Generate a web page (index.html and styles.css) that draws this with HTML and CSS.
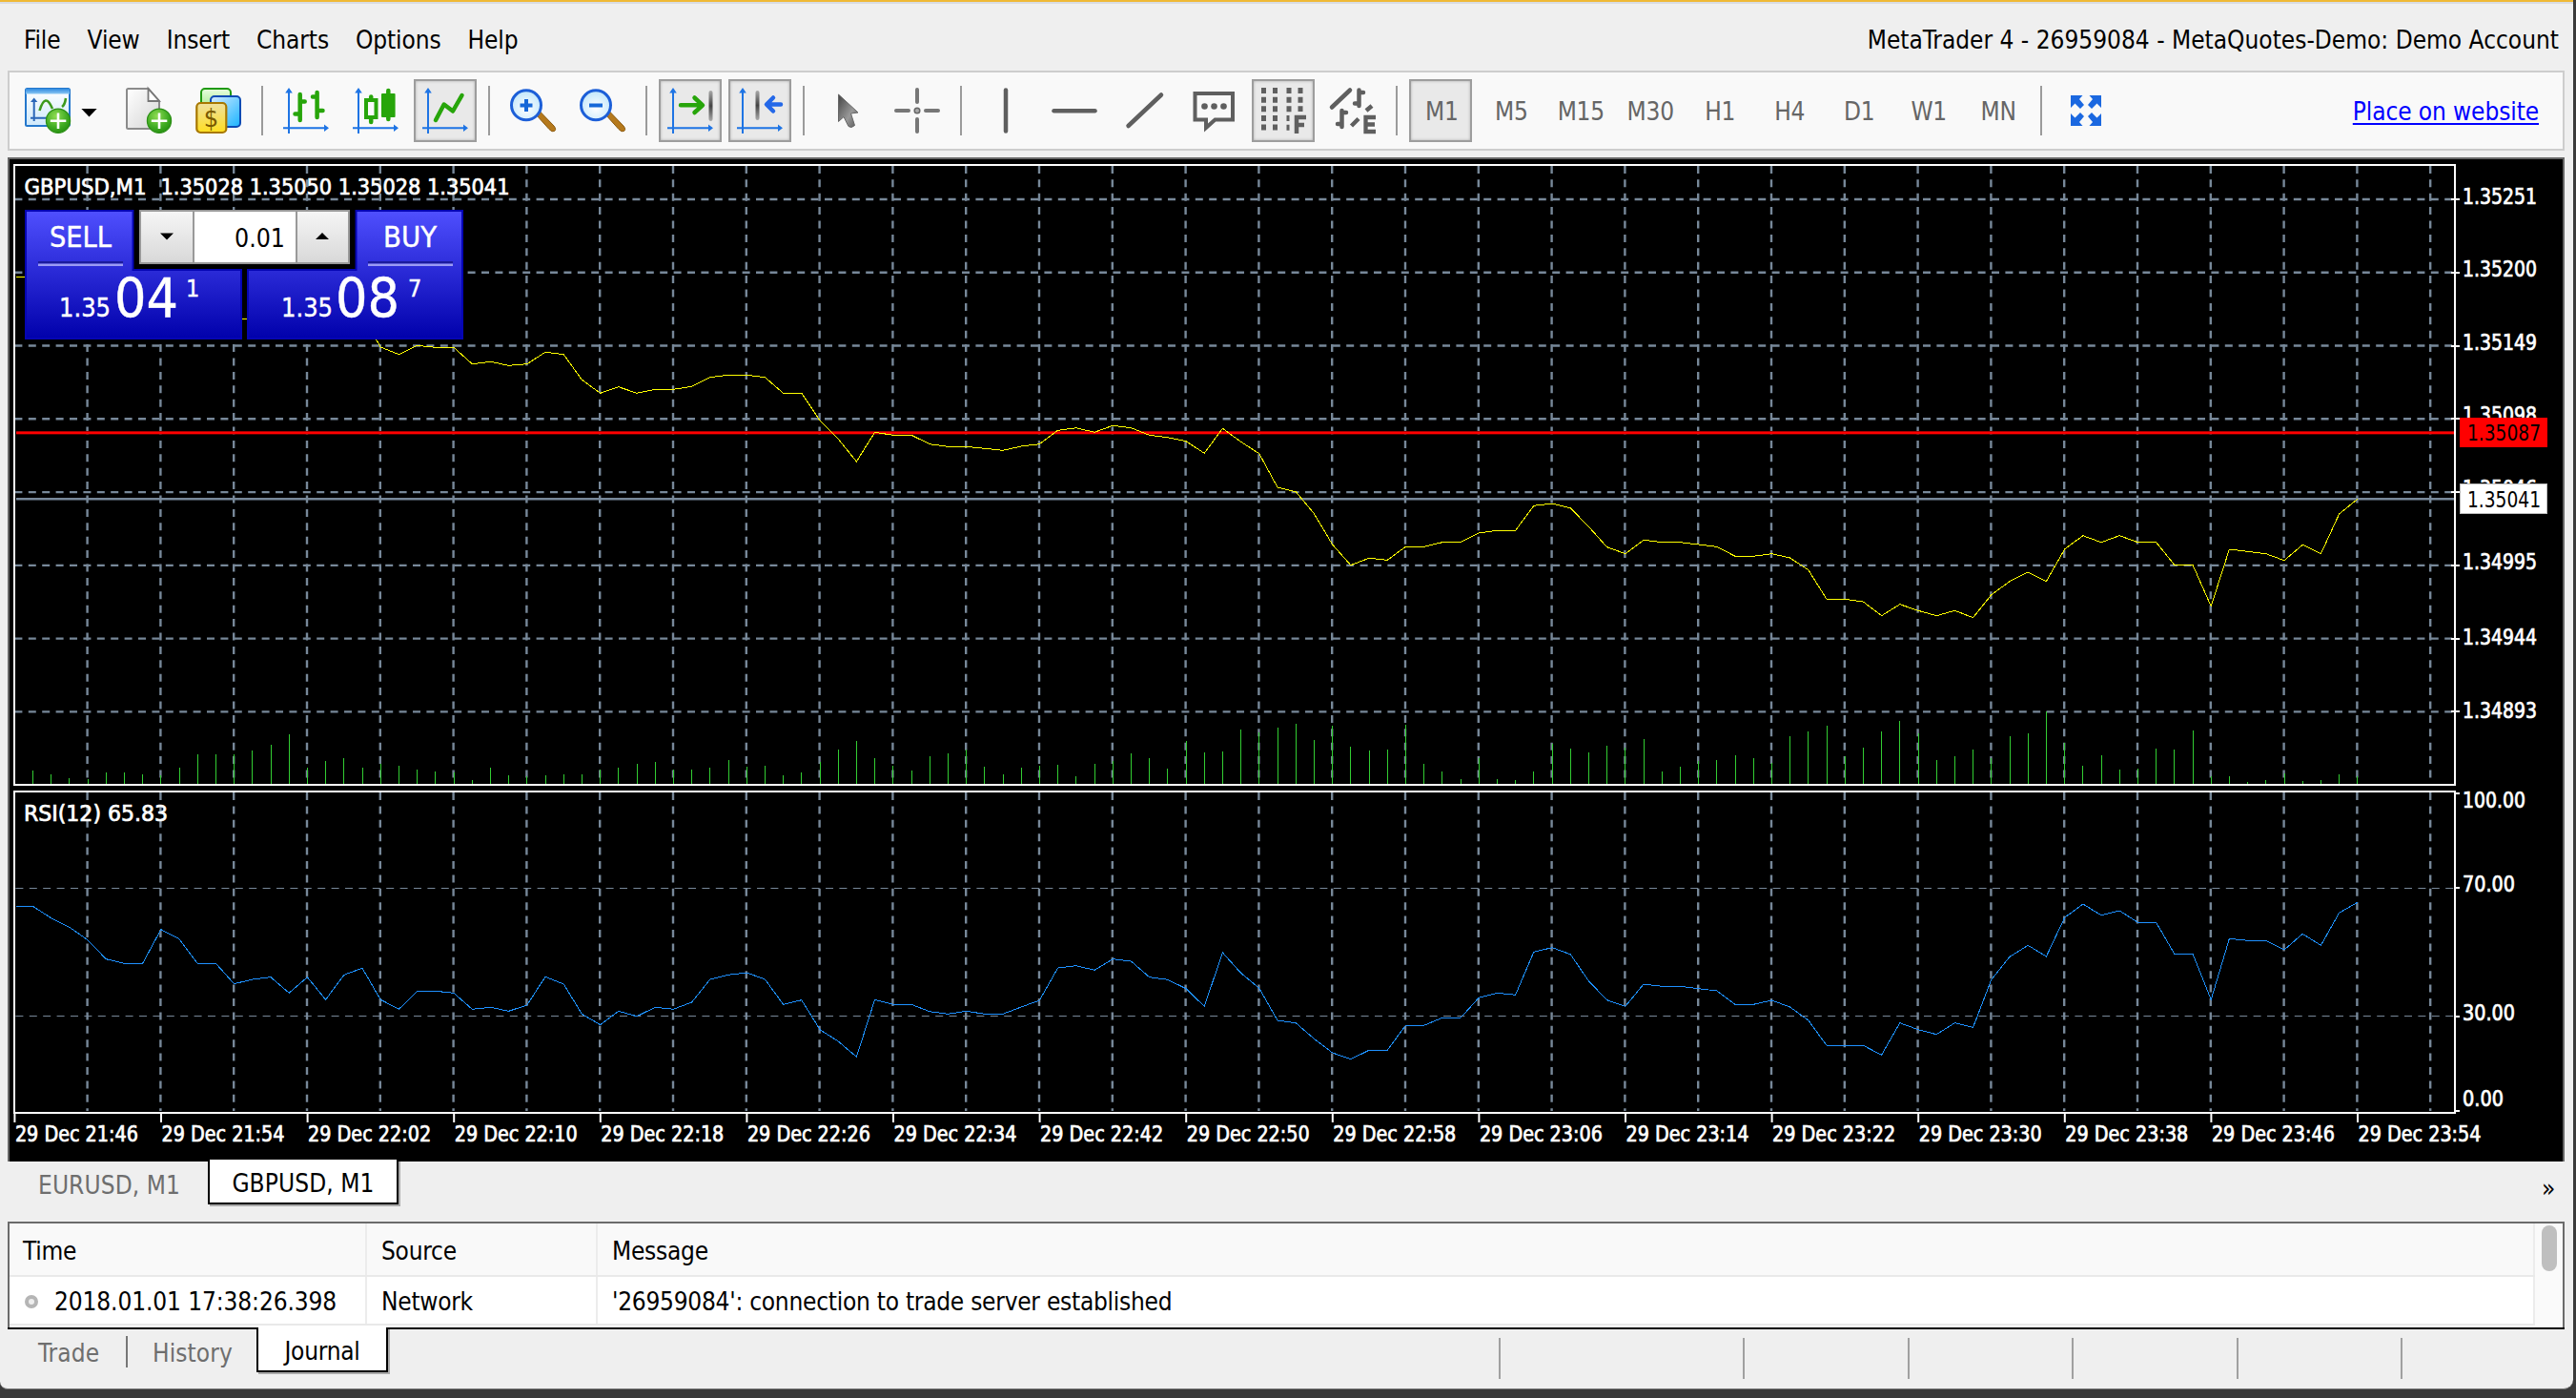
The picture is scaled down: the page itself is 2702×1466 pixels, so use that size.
FILE: index.html
```html
<!DOCTYPE html>
<html lang="en">
<head>
<meta charset="utf-8">
<title>MetaTrader 4</title>
<link rel="stylesheet" href="styles.css">
</head>
<body>
<svg class="defs" width="0" height="0" aria-hidden="true">
  <defs>
    <linearGradient id="g-head" x1="0" y1="0" x2="0" y2="1"><stop offset="0" stop-color="#2f8ae0"/><stop offset="1" stop-color="#8cc8f4"/></linearGradient>
    <linearGradient id="g-pane" x1="0" y1="0" x2="0" y2="1"><stop offset="0" stop-color="#fff"/><stop offset="1" stop-color="#cfe9fb"/></linearGradient>
    <radialGradient id="g-plus" cx=".4" cy=".3" r=".8"><stop offset="0" stop-color="#8fdc52"/><stop offset=".6" stop-color="#3fab22"/><stop offset="1" stop-color="#1f8a0c"/></radialGradient>
    <linearGradient id="g-page" x1="0" y1="0" x2="1" y2="1"><stop offset="0" stop-color="#fff"/><stop offset="1" stop-color="#d5d5d5"/></linearGradient>
    <linearGradient id="g-gold" x1="0" y1="0" x2="0" y2="1"><stop offset="0" stop-color="#efe0a0"/><stop offset="1" stop-color="#ffdf20"/></linearGradient>
    <linearGradient id="g-blue" x1="0" y1="0" x2="1" y2="1"><stop offset="0" stop-color="#d9ecff"/><stop offset="1" stop-color="#19b4ff"/></linearGradient>
    <linearGradient id="g-green" x1="0" y1="0" x2="0" y2="1"><stop offset="0" stop-color="#e8ffe0"/><stop offset="1" stop-color="#8fe070"/></linearGradient>
    <radialGradient id="g-lens" cx=".5" cy=".6" r=".6"><stop offset="0" stop-color="#fff"/><stop offset="1" stop-color="#bfe6fb"/></radialGradient>
    <linearGradient id="g-panel" gradientUnits="userSpaceOnUse" x1="0" y1="220" x2="0" y2="356"><stop offset="0" stop-color="#5050ff"/><stop offset="1" stop-color="#0000aa"/></linearGradient>
    <linearGradient id="g-spin" x1="0" y1="0" x2="0" y2="1"><stop offset="0" stop-color="#f6f6f6"/><stop offset="1" stop-color="#d8d8d8"/></linearGradient>
    <linearGradient id="g-bar" x1="0" y1="0" x2="0" y2="1"><stop offset="0" stop-color="#aaa"/><stop offset=".5" stop-color="#444"/><stop offset="1" stop-color="#aaa"/></linearGradient>
    <linearGradient id="g-cur" x1="0" y1="0" x2="1" y2="1"><stop offset="0" stop-color="#444"/><stop offset=".6" stop-color="#999"/><stop offset="1" stop-color="#555"/></linearGradient>
    <g id="axes"><path d="M6 48V4M0 42.3H45" fill="none" stroke="#1e74e4" stroke-width="2"/><path d="M2.2 5.5L6 0l3.800 5.500zM43 38.500l5 3.800-5 3.800z" fill="#1e74e4"/></g>
    <g id="plus"><circle cx="35" cy="34.700" r="12.600" fill="url(#g-plus)" stroke="#2c8f16" stroke-width="1.200"/><path d="M35 26.500v16.500M26.800 34.700h16.500" stroke="#fff" stroke-width="2.600"/></g>
    <g id="lens"><path d="M27.500 28.500l4-3.500L46 40q3 4 .5 5.500T41 43.500z" fill="#b5791c" stroke="#8a5a10" stroke-width="1"/><circle cx="17" cy="18.300" r="15.500" fill="url(#g-lens)" stroke="#1c5fd8" stroke-width="3"/></g>
  </defs>
</svg>

<div class="window">
  <header class="menubar">
    <nav class="menu"><span>File</span><span>View</span><span>Insert</span><span>Charts</span><span>Options</span><span>Help</span></nav>
    <span class="account">MetaTrader 4 - 26959084 - MetaQuotes-Demo: Demo Account</span>
  </header>

  <div class="toolbar">
    <span class="btn"><svg viewBox="0 0 48 48"><rect x="1" y="1" width="46" height="39" rx="1.500" fill="url(#g-pane)" stroke="#2477cc" stroke-width="2"/><rect x="1" y="1" width="46" height="5.500" fill="url(#g-head)"/><path d="M9.700 35V13M6 31.700h18" stroke="#2a66b8" stroke-width="2" fill="none"/><path d="M6 15l3.700-4.500 3.700 4.500z" fill="#2a66b8"/><path d="M15.500 24q6-20 13.500-2M39 20q3-2 4-9" fill="none" stroke="#3d9a1c" stroke-width="2.600"/><use href="#plus"/></svg></span>
    <span class="drop"><svg viewBox="0 0 18 10"><path d="M0 0h18L9 9.500z"/></svg></span>
    <span class="btn"><svg viewBox="0 0 48 48"><path d="M2.500 1H23.500L35 14V43H2.500Q1 43 1 41.500V2.500Q1 1 2.500 1z" fill="url(#g-page)" stroke="#8b8b8b" stroke-width="2"/><path d="M23.500 1V14H35z" fill="#fff" stroke="#777" stroke-width="1.800"/><use href="#plus"/></svg></span>
    <span class="btn"><svg viewBox="0 0 48 48"><rect x="6" y="1" width="31" height="28" rx="4" fill="url(#g-green)" stroke="#1f9a10" stroke-width="2"/><rect x="16" y="9" width="31" height="32" rx="4" fill="url(#g-blue)" stroke="#0b4bb4" stroke-width="2"/><rect x="1.300" y="16" width="31" height="31" rx="4" fill="url(#g-gold)" stroke="#a87800" stroke-width="2.200"/><text class="dollar" x="16.500" y="40.500" text-anchor="middle">$</text></svg></span>
    <i class="sep"></i>
    <span class="btn"><svg viewBox="0 0 48 48"><use href="#axes"/><path d="M17.700 7V34M12.500 27.500h5M17.700 14.500h5M35.600 5V31M31 9.500h4.500M36 24h5.500" fill="none" stroke="#27a50a" stroke-width="4.500" stroke-linecap="round"/></svg></span>
    <span class="btn"><svg viewBox="0 0 48 48"><use href="#axes"/><path d="M19.200 9.500V36" stroke="#27a50a" stroke-width="4.500" stroke-linecap="round"/><rect x="14" y="13" width="10.500" height="18" fill="#fafafa" stroke="#27a50a" stroke-width="4"/><path d="M37.300 3V33" stroke="#27a50a" stroke-width="4.500" stroke-linecap="round"/><rect x="30" y="6" width="14.600" height="25" rx="1" fill="#27a50a"/></svg></span>
    <span class="btn on"><svg viewBox="0 0 48 48"><use href="#axes"/><path d="M14 34L22.700 17.500L32 24.500L41.500 8" fill="none" stroke="#27a50a" stroke-width="4.500" stroke-linecap="round" stroke-linejoin="round"/></svg></span>
    <i class="sep"></i>
    <span class="btn"><svg viewBox="0 0 48 48"><use href="#lens"/><path d="M17 12v13M10.500 18.500h13" stroke="#1668d8" stroke-width="4"/></svg></span>
    <span class="btn"><svg viewBox="0 0 48 48"><use href="#lens"/><path d="M10 18.500h14" stroke="#1668d8" stroke-width="4"/></svg></span>
    <i class="sep"></i>
    <span class="btn on"><svg viewBox="0 0 48 48"><use href="#axes"/><path d="M14 18.300H36M28.500 10.500L37 18.300L28.500 26" fill="none" stroke="#27a50a" stroke-width="4.500" stroke-linecap="round" stroke-linejoin="round"/><rect x="43.500" y="3" width="4" height="32" rx="2" fill="url(#g-bar)"/></svg></span>
    <span class="btn on"><svg viewBox="0 0 48 48"><use href="#axes"/><rect x="19.500" y="3" width="4" height="31" rx="2" fill="url(#g-bar)"/><path d="M46 17.500H32M38 10.500L31 17.500L38 24.500" fill="none" stroke="#2468e8" stroke-width="4.500" stroke-linecap="round" stroke-linejoin="round"/></svg></span>
    <i class="sep"></i>
    <span class="btn"><svg viewBox="0 0 48 48"><path d="M14.500 7V35.500L20 30.500L25 40.500Q28 43 31.500 39.500L27.500 27L35 26z" fill="url(#g-cur)" stroke="#666" stroke-width="1"/></svg></span>
    <span class="btn"><svg viewBox="0 0 48 48"><g fill="#777"><rect x="22" y="0" width="4" height="17" rx="2"/><rect x="22" y="31" width="4" height="17" rx="2"/><rect x="0" y="22" width="17" height="4" rx="2"/><rect x="31" y="22" width="17" height="4" rx="2"/></g><circle cx="24" cy="24" r="2.800" fill="#aaa" stroke="#666" stroke-width="1.500"/></svg></span>
    <i class="sep"></i>
    <span class="btn"><svg viewBox="0 0 48 48"><path d="M24 2.500V45.500" stroke="#5f5f5f" stroke-width="4.500" stroke-linecap="round"/></svg></span>
    <span class="btn"><svg viewBox="0 0 48 48"><path d="M2.500 24.300H45.500" stroke="#5f5f5f" stroke-width="4.500" stroke-linecap="round"/></svg></span>
    <span class="btn"><svg viewBox="0 0 48 48"><path d="M7.500 40L42 7.500" stroke="#5f5f5f" stroke-width="4.500" stroke-linecap="round"/></svg></span>
    <span class="btn"><svg viewBox="0 0 48 48"><path d="M4.500 6H44V33.500H25.500L16 42V33.500H4.500z" fill="none" stroke="#5f5f5f" stroke-width="4"/><g fill="#5f5f5f"><circle cx="14.500" cy="19.500" r="3.300"/><circle cx="24.500" cy="19.500" r="3.300"/><circle cx="34.500" cy="19.500" r="3.300"/></g></svg></span>
    <span class="btn on"><svg viewBox="0 0 48 48"><g fill="none" stroke="#5f5f5f" stroke-width="5" stroke-dasharray="6 3.650"><path d="M3.500 0V46M15.500 0V46M30 0V26M42 0V25"/><path d="M29 29v17" stroke-width="3"/></g><path d="M38 48V31h10M38 39h8" fill="none" stroke="#5f5f5f" stroke-width="4.500"/></svg></span>
    <span class="btn"><svg viewBox="0 0 48 48"><g fill="none" stroke="#5f5f5f" stroke-width="4.500" stroke-linecap="round"><path d="M2 20.500L21 2.500M30.500 2.500V19M26 16.500h4.500M30.500 5h4.500M12.500 24v17M8 38h4.500M12.500 26h4.500"/><path d="M22.500 40L30 32.500M38 24l6-5" stroke-linecap="butt"/></g><path d="M48 31H37.500V46H48M37.500 38.500H47" fill="none" stroke="#5f5f5f" stroke-width="4.300"/></svg></span>
    <i class="sep"></i>
    <span class="btn on period">M1</span><span class="btn period">M5</span><span class="btn period">M15</span><span class="btn period">M30</span><span class="btn period">H1</span><span class="btn period">H4</span><span class="btn period">D1</span><span class="btn period">W1</span><span class="btn period">MN</span>
    <i class="sep"></i>
    <span class="btn"><svg viewBox="0 0 48 48"><g fill="#1b68e0"><path id="fs" d="M8 8H20.500L17 12L22 18L18 22L12.500 16.500L8 21z"/><use href="#fs" transform="matrix(-1 0 0 1 48 0)"/><use href="#fs" transform="matrix(1 0 0 -1 0 48)"/><use href="#fs" transform="matrix(-1 0 0 -1 48 48)"/></g></svg></span>
    <a class="link">Place on website</a>
  </div>

  <main class="chart">
    <svg id="chart" viewBox="8 165 2682 1053" width="2682" height="1053">
      <rect x="8" y="165" width="2682" height="1053" fill="#666"/>
      <rect x="10" y="167" width="2678" height="1051" fill="#000"/>
      <g id="grid"></g>
      <g id="volumes"></g>
      <path class="level-ask-edge" d="M17 453.700H2574"/><path class="level-ask" d="M17 454H2574"/>
      <path class="level-bid" d="M17 523.200H2574"/>
      <g id="series"></g>
      <path class="frame" d="M2575 173H15V823H2575zM2575 830H15V1167H2575z"/>
      <g id="axis"></g>
      <rect x="2580" y="438" width="92" height="31" fill="#f00"/>
      <text class="tag" x="2588" y="461.500" textLength="77" lengthAdjust="spacingAndGlyphs">1.35087</text>
      <rect x="2580.500" y="507.500" width="91" height="31" fill="#fff" stroke="#bbb"/>
      <text class="tag" x="2588" y="531.500" textLength="77" lengthAdjust="spacingAndGlyphs">1.35041</text>
      <text class="lbl title" x="25.500" y="204" textLength="128" lengthAdjust="spacingAndGlyphs">GBPUSD,M1</text>
      <text class="lbl title" x="168.500" y="204" textLength="366" lengthAdjust="spacingAndGlyphs">1.35028 1.35050 1.35028 1.35041</text>
      <text class="lbl title" x="25" y="861" textLength="151" lengthAdjust="spacingAndGlyphs">RSI(12) 65.83</text>

      <g class="trade">
        <rect x="140" y="220" width="233" height="64" fill="#000"/>
        <rect x="254" y="282" width="5" height="74" fill="#000"/>
        <path d="M27 221H139.500V283H253V355H27zM373.500 221H485V355H260V283H373.500z" fill="url(#g-panel)" stroke="#0505b4" stroke-width="2"/>
        <path d="M40 275.300H129M386 275.300H475" stroke="#1c1c9c" stroke-width="2.400"/>
        <path d="M40 277.700H129M386 277.700H475" stroke="#9c9cf4" stroke-width="2.400"/>
        <rect x="147" y="221" width="219" height="55" fill="#fff" stroke="#999" stroke-width="2"/>
        <rect x="147" y="221" width="56" height="55" fill="url(#g-spin)" stroke="#999" stroke-width="2"/>
        <rect x="311" y="221" width="55" height="55" fill="url(#g-spin)" stroke="#999" stroke-width="2"/>
        <path d="M168 244.500h14l-7 7zM331 251h14l-7-7z" fill="#000"/>
        <text x="52" y="259" font-size="29.500" textLength="65" lengthAdjust="spacingAndGlyphs">SELL</text>
        <text x="402" y="259" font-size="29.500" textLength="56" lengthAdjust="spacingAndGlyphs">BUY</text>
        <text x="246" y="259" font-size="26" textLength="53" lengthAdjust="spacingAndGlyphs" class="qty">0.01</text>
        <text x="62" y="332" font-size="27" textLength="54" lengthAdjust="spacingAndGlyphs">1.35</text>
        <text x="120" y="333" font-size="57" textLength="67" lengthAdjust="spacingAndGlyphs">04</text>
        <text x="195" y="311" font-size="25">1</text>
        <text x="295" y="332" font-size="27" textLength="54" lengthAdjust="spacingAndGlyphs">1.35</text>
        <text x="352" y="333" font-size="57" textLength="67" lengthAdjust="spacingAndGlyphs">08</text>
        <text x="428" y="311" font-size="25">7</text>
      </g>
    </svg>
  </main>

  <div class="tabs"><span class="tab t1">EURUSD, M1</span><span class="tab active">GBPUSD, M1</span><span class="more">»</span></div>

  <section class="log">
    <div class="table">
      <div class="row head"><span>Time</span><span>Source</span><span>Message</span></div>
      <div class="row"><span class="time"><i class="dot"></i>2018.01.01 17:38:26.398</span><span>Network</span><span>'26959084': connection to trade server established</span></div>
    </div>
    <div class="scroll"><i></i></div>
  </section>

  <footer class="bottom">
    <span class="tab t2">Trade</span><i class="split"></i><span class="tab t3">History</span><span class="tab active journal">Journal</span>
    <div class="status"><i></i><i></i><i></i><i></i><i></i><i></i></div>
  </footer>
</div>
<script src="chart.js"></script>
</body>
</html>
```
FILE: styles.css
```css
* { box-sizing: border-box; }
html, body { margin: 0; }
body {
  width: 2702px; height: 1466px; overflow: hidden;
  background: #3a3a3a;
  font: 26px/30px "DejaVu Sans Condensed", "DejaVu Sans", sans-serif;
  font-stretch: condensed;
  letter-spacing: -0.25px;
  color: #000;
}
.defs { position: absolute; }
.window {
  width: 2699px; height: 1457px;
  display: flex; flex-direction: column;
  background: #efefef;
  border-top: 2px solid #efb936;
  border-bottom: 1px solid #777;
  border-radius: 0 0 10px 8px;
}
.menubar {
  height: 72px; flex: none;
  display: flex; justify-content: space-between; align-items: center;
  padding: 6px 15px 0 25px;
  border-top: 2px solid #d9dce2;
  letter-spacing: 0;
}
.menu { display: flex; gap: 28px; letter-spacing: -0.1px; }

.toolbar {
  width: 2682px; height: 84px; flex: none;
  margin-left: 8px; padding-left: 7px;
  display: flex; align-items: center; gap: 6.9px;
  background: #f9f9f9;
  border: 2px solid #cdcdcd;
}
.btn {
  width: 66px; height: 66px; flex: none;
  display: flex; align-items: center; justify-content: center;
  color: #666;
}
.btn svg { width: 48px; height: 48px; overflow: visible; }
.btn.on { background: #e9e9e9; border: 2px solid #9d9d9d; box-shadow: inset 0 0 3px #aaa; }
.btn.period { padding: 2px 0 0 2px; margin-right: 0.100px; }
.drop { width: 26px; display: flex; justify-content: center; margin: 0 9px 0 -9px; }
.drop svg { width: 17px; height: 9px; margin-top: 4px; }
.sep { width: 2px; height: 52px; margin: 0 5.25px; background: #9b9b9b; flex: none; }
.dollar { font-size: 27px; fill: #7a5a00; letter-spacing: 0; }
.link { margin: 2px 25px 0 auto; letter-spacing: -0.1px; color: #00f; text-decoration: underline; text-decoration-thickness: 2px; text-underline-offset: 3px; }

.chart { height: 1053px; flex: none; margin: 7px 0 0 8px; }
.chart svg { display: block; }
.chart text { letter-spacing: 0; fill: #fff; }
.chart .lbl { font-size: 22.5px; stroke: #fff; stroke-width: .7px; }
.chart .lbl.title { font-size: 23.5px; }
.chart .tag { font-size: 22.5px; fill: #000; }
.chart .trade text { stroke: #fff; stroke-width: .4px; }
.chart .trade .qty { fill: #000; stroke: none; }
.frame { fill: none; stroke: #fff; stroke-width: 2; }
.grid-line { fill: none; stroke: #778899; stroke-width: 2.4; stroke-dasharray: 8 6.4; }
.grid-line.thin { stroke-width: 1; }
.level-ask { stroke: #f00; stroke-width: 2; }
.level-ask-edge { stroke: #a80000; stroke-width: 3.400; }
.level-bid { stroke: #778899; stroke-width: 2.400; }
.tick { stroke: #fff; stroke-width: 2; }
.volume { stroke: #32cd32; stroke-width: 1; shape-rendering: crispEdges; }
.series { fill: none; stroke-width: 1; shape-rendering: crispEdges; }
.series.price { stroke: #ff0; }
.series.rsi { stroke: #1e90ff; }

.tabs { height: 63px; flex: none; display: flex; align-items: flex-start; padding-left: 40px; }
.tab { color: #6e6e6e; letter-spacing: 0.1px; }
.t1 { width: 178px; padding-top: 10px; }
.tab.active {
  height: 47px; margin-top: -2px; padding-top: 10px;
  width: 200px; text-align: center; color: #000;
  background: #fff; border: 2px solid #000; border-top: 0;
  box-shadow: 2px 2px 0 #aaa;
}
.more { margin: 13px 19px 0 auto; }

.log {
  width: 2682px; height: 111px; flex: none; margin-left: 8px;
  display: flex;
  background: #fff;
  border: 2px solid #6b6b6b; border-bottom: 0; border-right-width: 2px;
}
.table { flex: 1; }
.row { height: 51px; display: grid; grid-template-columns: 375px 242px 1fr; border-bottom: 2px solid #e9e9e9; }
.row.head { height: 56px; background: #f9f9f9; }
.row > span { display: flex; align-items: center; padding: 3px 0 0 15px; border-right: 2px solid #ececec; }
.row.head > span:first-child { padding-left: 14px; }
.row > .time { padding: 2px 0 0 14px; letter-spacing: -0.1px; }
.dot { width: 14px; height: 14px; margin-right: 17px; margin-left: 2px; border: 4px solid #b5b5b5; border-radius: 50%; background: #eee; }
.scroll { width: 29px; background: #fafafa; padding: 2px 0 0 7px; }
.scroll i { display: block; width: 16px; height: 48px; border-radius: 8px; background: #bfbfbf; }

.bottom { width: 2682px; flex: 1; margin-left: 8px; border-top: 2px solid #000; display: flex; align-items: flex-start; padding-left: 32px; }
.t2 { width: 92px; padding-top: 10px; }
.split { width: 2px; height: 33px; margin-top: 7px; background: #777; }
.t3 { width: 135px; padding: 10px 0 0 26px; }
.tab.journal { width: 138px; letter-spacing: -0.25px; }
.status { display: flex; margin: 9px 170px 0 auto; }
.status i { width: 2px; height: 43px; background: #a0a0a0; margin-left: 170.500px; }
.status i:nth-child(2) { margin-left: 254.500px; }
```
FILE: chart.js
```js
const STEP = 19.2, X0 = 34.4;
const barX = i => X0 + STEP * i;

// Close price, volume and RSI as vertical positions in thirds of a pixel below each pane's origin.
const priceA = [72,95,67,73,73,125,118,130,125,88,95,175,217,197,217,205,205,196,167,160,160,167,217,217,303,361,432];
const priceB = [160,169,169,197,205,205,211,217,204,197,154,146,160,139,146,169,176,188,226,148,190,227,333,347,416,513,578,556,562,520,520,506,506,477,469,469,391,384,398,457,521,542,499,506,506,513,520,550,550,542,555,593,685,685,693,737,701,721,737,721,743,671,629,600,629,528,485,506,485,506,506,577,577,707,528,535,542,563,514,542,417,370];
const rsi = [391,428,457,497,557,571,571,464,494,571,571,635,621,614,664,614,685,607,586,685,715,658,658,664,715,709,721,702,613,636,730,764,721,737,709,715,693,621,607,600,621,700,686,779,816,865,685,700,700,722,730,721,730,730,708,687,585,578,592,557,564,614,622,650,706,537,601,649,750,758,808,852,872,844,844,766,766,742,742,679,664,670,535,521,542,626,686,706,636,643,643,650,657,700,700,687,708,750,829,829,829,859,758,779,794,758,772,622,550,514,549,427,384,419,405,442,442,541,541,685,493,499,499,528,478,514,412,379];
const volA = [1404,1416,1428,1431,1410,1410,1416,1419,1395,1353,1353,1353,1341,1323,1290,1395,1374,1365,1395,1383,1389,1401,1407,1410,1434,1395,1419,1422,1419,1416,1416,1401,1395,1383,1377,1401,1401,1395,1371,1392,1389,1419,1410,1377,1338,1311];
const volB = [1185,1209,1224,1179,1170,1158,1212,1236,1215,1209,1206,1242,1203,1194,1170,1185,1218,1131,1167,1164,1095,1104,1089,1077,1128,1083,1149,1161,1158,1080,1203,1227,1251,1185,1251,1254,1227,1140,1155,1167,1146,1152,1125,1227,1212,1194,1191,1176,1185,1200,1116,1101,1083,1179,1152,1101,1068,1107,1191,1179,1158,1185,1116,1107,1038,1137,1209,1176,1221,1218,1155,1158,1098,1242,1242,1260,1254,1233,1257,1254,1236,1242];

const price = [...priceA.map(v => 340 + v / 3), ...priceB.map(v => 400 + v / 3)];
const volume = [...volA.map(v => 340 + v / 3), ...volB.map(v => 400 + v / 3)];

function add(parent, tag, attrs, text) {
  const el = document.createElementNS('http://www.w3.org/2000/svg', tag);
  for (const k in attrs) el.setAttribute(k, attrs[k]);
  if (text) {
    el.textContent = text;
    el.setAttribute('lengthAdjust', 'spacingAndGlyphs');
  }
  document.getElementById(parent).appendChild(el);
}

for (let k = 0; k <= 32; k++) {
  const x = 91.6 + 76.8 * k;
  add('grid', 'path', { class: 'grid-line', d: `M${x} 173.900V822M${x} 831V1165` });
}
const priceLabels = ['1.35251', '1.35200', '1.35149', '1.35098', '1.35046', '1.34995', '1.34944', '1.34893'];
const baselines = [213.5, 290, 367, 443, 520, 597, 676, 753];
priceLabels.forEach((t, k) => {
  const y = 209 + 76.77 * k;
  add('grid', 'path', { class: 'grid-line', d: `M15.400 ${y}H2574` });
  add('axis', 'path', { class: 'tick', d: `M2571 ${Math.round(y)}H2580` });
  add('axis', 'text', { class: 'lbl', x: 2583, y: baselines[k], textLength: 78 }, t);
});
[['100.00', 832, 846.5, 66], ['70.00', 931, 935, 55], ['30.00', 1066, 1069.5, 55], ['0.00', 1165, 1160, 43]].forEach(([t, y, b, w]) => {
  add('axis', 'path', { class: 'tick', d: `M2574 ${y}H2580` });
  add('axis', 'text', { class: 'lbl', x: 2583, y: b, textLength: w }, t);
});
[931.5, 1065.5].forEach(y => add('grid', 'path', { class: 'grid-line thin', d: `M16.400 ${y}H2574` }));
add('axis', 'path', { class: 'tick', d: 'M2575 172V824M2575 829V1168' });

for (let k = 0; k <= 16; k++) {
  const x = 15.4 + 153.6 * k, m = 21 * 60 + 46 + 8 * k;
  const label = `29 Dec ${Math.floor(m / 60)}:${String(m % 60).padStart(2, '0')}`;
  add('axis', 'path', { class: 'tick', d: `M${x} 1167V1177` });
  add('axis', 'text', { class: 'lbl', x: x + .5, y: 1196.500, textLength: 129 }, label);
}

volume.forEach((y, i) => add('volumes', 'path', { class: 'volume', d: `M${barX(i)} ${y}V822` }));
const pts = (a, from) => a.map((y, i) => `${barX(i + from).toFixed(1)},${y.toFixed(1)}`).join(' ');
add('series', 'polyline', { class: 'series price', points: '394.4,355.7 ' + pts(price, 19) });
add('series', 'path', { class: 'series price', d: 'M17 290.500H26' });
add('series', 'polyline', { class: 'series rsi', points: '17,950.3 ' + pts(rsi.map(v => 820 + v / 3), 0) });
const stub = document.createElementNS('http://www.w3.org/2000/svg', 'path');
stub.setAttribute('class', 'series price');
stub.setAttribute('d', 'M254 334.500H259');
document.querySelector('.trade').appendChild(stub);
```
